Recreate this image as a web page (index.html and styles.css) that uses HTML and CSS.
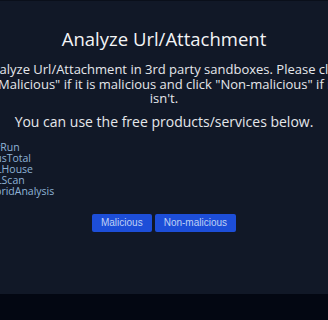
FILE: index.html
```html
<!DOCTYPE html>
<html lang="en">
<head>
  <meta charset="UTF-8">
  <meta name="viewport" content="width=device-width, initial-scale=1.0">
  <title>Analyze Url/Attachment</title>
  <link rel="stylesheet" href="styles.css">
</head>
<body>
  <div class="page">
    <div class="content">
      <h1>Analyze Url/Attachment</h1>
      <p class="intro">Analyze Url/Attachment in 3rd party sandboxes. Please click "Malicious" if it is malicious and click "Non-malicious" if it isn't.</p>
      <p class="hint">You can use the free products/services below.</p>
      <ul class="services">
        <li><a href="#">AnyRun</a></li>
        <li><a href="#">VirusTotal</a></li>
        <li><a href="#">URLHouse</a></li>
        <li><a href="#">URLScan</a></li>
        <li><a href="#">HybridAnalysis</a></li>
      </ul>
      <div class="actions">
        <button class="btn">Malicious</button>
        <button class="btn">Non-malicious</button>
      </div>
    </div>
  </div>
  <footer class="footer"></footer>
</body>
</html>
```

FILE: styles.css
```css
body {
  margin: 0;
  background-color: #111827;
  font-family: "Open Sans", sans-serif;
  color: #e5e7eb;
  overflow: hidden;
}
.page {
  height: 293px;
  border-top: 1px solid #0a0f1a;
  display: flex;
  justify-content: center;
}
.content {
  flex: 0 0 372px;
  width: 372px;
}
h1 {
  margin: 26px 0 0;
  font-size: 18.5px;
  font-weight: 400;
  line-height: 24px;
  text-align: center;
  color: #f3f4f6;
}
.intro {
  margin: 11px 0 0;
  font-size: 13px;
  line-height: 14.5px;
  text-align: center;
}
.hint {
  margin: 7px 0 0;
  font-size: 14px;
  line-height: 18px;
  text-align: center;
}
.services {
  list-style: none;
  margin: 11px 0 0 4px;
  padding: 0;
  font-size: 10.5px;
  line-height: 11px;
}
.services a {
  color: #8fb3d6;
  text-decoration: none;
}
.actions {
  margin-top: 17px;
  display: flex;
  justify-content: center;
  gap: 3px;
}
.btn {
  background-color: #1d4ed8;
  color: #bfd0f5;
  border: none;
  border-radius: 2px;
  padding: 0 9px;
  height: 18px;
  font-family: "Liberation Sans", sans-serif;
  font-size: 10px;
}
.footer {
  height: 26px;
  background-color: #030712;
}
```
